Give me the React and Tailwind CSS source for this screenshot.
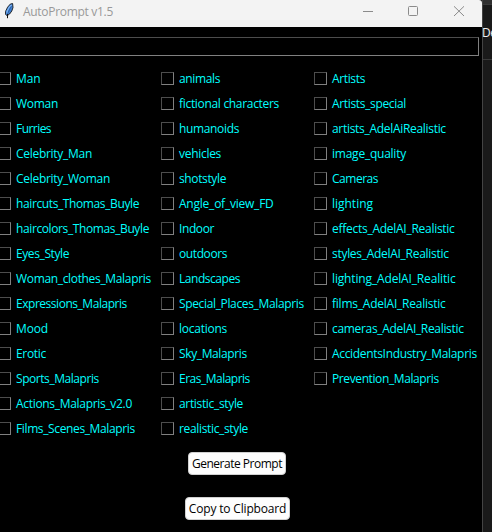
import { useLayoutEffect, useRef, useState } from 'react';

// Each option is a label and the width its text takes up.
const COLUMNS = [
  {
    className: 'w-[163px]',
    items: [['Man', 24.5], ['Woman', 42], ['Furries', 35], ['Celebrity_Man', 76], ['Celebrity_Woman', 94], ['haircuts_Thomas_Buyle', 123], ['haircolors_Thomas_Buyle', 133], ['Eyes_Style', 53], ['Woman_clothes_Malapris', 134.8], ['Expressions_Malapris', 110.8], ['Mood', 32], ['Erotic', 30], ['Sports_Malapris', 82.8], ['Actions_Malapris_v2.0', 116], ['Films_Scenes_Malapris', 118.8]],
  },
  {
    className: 'w-[153px]',
    items: [['animals', 41], ['fictional characters', 100], ['humanoids', 60], ['vehicles', 42], ['shotstyle', 47], ['Angle_of_view_FD', 94.6], ['Indoor', 35], ['outdoors', 48], ['Landscapes', 61], ['Special_Places_Malapris', 124.8], ['locations', 48], ['Sky_Malapris', 67.8], ['Eras_Malapris', 70.8], ['artistic_style', 64], ['realistic_style', 69]],
  },
  {
    className: 'w-[166px]',
    items: [['Artists', 33], ['Artists_special', 74], ['artists_AdelAiRealistic', 113.8], ['image_quality', 74], ['Cameras', 46], ['lighting', 41], ['effects_AdelAI_Realistic', 122.6], ['styles_AdelAI_Realistic', 116.6], ['lighting_AdelAI_Realitic', 123.6], ['films_AdelAI_Realistic', 113.6], ['cameras_AdelAI_Realistic', 131.6], ['AccidentsIndustry_Malapris', 144.8], ['Prevention_Malapris', 106.8]],
  },
];

// Text whose tracking is adjusted so that it fills the given width.
function FitText({ text, width, className }) {
  const ref = useRef(null);
  const [spacing, setSpacing] = useState(0);
  useLayoutEffect(() => {
    const node = ref.current;
    node.style.letterSpacing = '0px';
    const next = (width - node.getBoundingClientRect().width) / text.length;
    node.style.letterSpacing = `${next}px`;
    setSpacing(next);
  }, [text, width]);
  return (
    <span ref={ref} className={`inline-block whitespace-nowrap ${className}`} style={{ letterSpacing: `${spacing}px` }}>
      {text}
    </span>
  );
}

function Feather() {
  return (
    <svg className="ml-1 mt-[3px] h-4 w-[11px] shrink-0" viewBox="0 0 11 16">
      <path d="M8.6 .5 6.3 1.1 3.6 4.2 1.5 8.5 1.6 11.3 3 12.8 5.6 11 7.8 8 9 4.5Z" fill="#3f7fd0" stroke="#1a1a1a" strokeWidth=".9" />
      <path d="M7.6 2 5.5 3.8 3.2 8 3 10.8" fill="none" stroke="#7db4f5" strokeWidth="1.3" />
      <path d="M7.4 3.2 5 7.6 3.4 11" fill="none" stroke="#1f4a86" strokeWidth=".6" />
      <path d="M3.5 11v4.2" fill="none" stroke="#111" strokeWidth="1" />
    </svg>
  );
}

function TitleBar() {
  return (
    <div className="flex h-[27px] shrink-0 justify-between rounded-tr-[3px] bg-[#f3f3f3]">
      <div className="flex">
        <Feather />
        <FitText text="AutoPrompt v1.5" width={90} className="ml-2 text-[12px] leading-[24px] text-[#999]" />
      </div>
      <svg className="h-[27px] w-[122px] shrink-0" viewBox="0 0 122 27" fill="none" stroke="#8b8b8b">
        <path d="M3 11.5h10" />
        <rect x="48.5" y="6.5" width="9" height="9" rx="1" />
        <path d="m94 6.3 10 9.7m0-9.7-10 9.7" />
      </svg>
    </div>
  );
}

function Option({ label, width }) {
  return (
    <label className="flex h-[25px] items-center">
      <span className="size-[13px] shrink-0 border border-t-[#4d4d4d] border-l-[#4d4d4d] border-r-[#808080] border-b-[#808080]" />
      <FitText text={label} width={width} className="ml-[5px] text-[12px] leading-[17px] text-[#00ffff]" />
    </label>
  );
}

function Button({ label, width, className }) {
  return (
    <button className={`flex h-[23px] items-center justify-center rounded-[4px] border border-[#d0d0d0] bg-[#fdfdfd] ${className}`}>
      <FitText text={label} width={width} className="text-[12px] leading-[17px] text-black" />
    </button>
  );
}

export default function App() {
  return (
    <div className="flex h-[532px] w-[492px] overflow-hidden bg-[#1a1a1a] font-['Open_Sans','Noto_Sans',sans-serif]">
      <div className="flex w-[482px] shrink-0 flex-col rounded-tr-[3px] bg-black">
        <TitleBar />
        <div className="mt-[10px] mr-[3px] h-[19px] shrink-0 border border-l-0 border-t-[#4d4d4d] border-r-[#808080] border-b-[#808080]" />
        <div className="-ml-[2px] mt-[10px] flex h-[375px] shrink-0">
          {COLUMNS.map((column) => (
            <div key={column.className} className={`shrink-0 ${column.className}`}>
              {column.items.map(([label, width]) => <Option key={label} label={label} width={width} />)}
            </div>
          ))}
        </div>
        <div className="mt-[11px] flex flex-col items-center gap-[22px] pr-[7px]">
          <Button label="Generate Prompt" width={90} className="mr-px w-[98px]" />
          <Button label="Copy to Clipboard" width={97.5} className="w-[105px]" />
        </div>
      </div>
      <div className="flex w-[10px] flex-col border-l border-[#444]">
        <div className="h-1 shrink-0 bg-[#303030]" />
        <div className="h-[56px] shrink-0 border-y border-[#3a3a3a] pt-[14px]">
          <span className="-ml-px text-[12px] leading-[20px] tracking-[-0.4px] text-[#eee]">De</span>
        </div>
      </div>
    </div>
  );
}
